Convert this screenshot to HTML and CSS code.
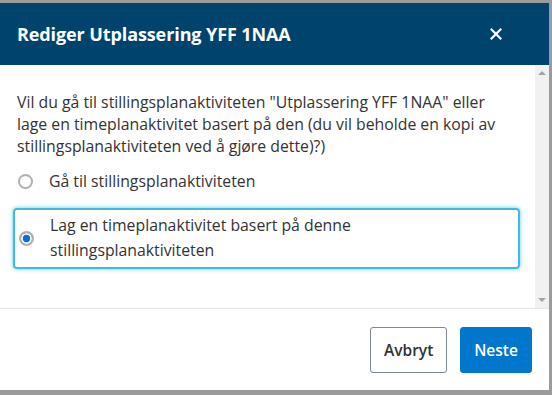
FILE: index.html
```html
<!DOCTYPE html>
<html lang="no">
  <head>
    <title>Rediger Utplassering YFF 1NAA</title>
    <meta name="viewport" content="width=device-width, initial-scale=1.0">
    <link rel="stylesheet" href="styles.css">
  </head>
  <body>
    <div class="modal">
      <div class="modal-header">
        <h1 class="modal-title">Rediger Utplassering YFF 1NAA</h1>
        <button class="close-btn" aria-label="Lukk">
          <svg width="12" height="12" viewBox="0 0 12 12">
            <path d="M1.5 1.5 L10.5 10.5 M10.5 1.5 L1.5 10.5" stroke="#fff" stroke-width="2.2" stroke-linecap="square"/>
          </svg>
        </button>
      </div>
      <div class="modal-body">
        <div class="body-content">
          <p class="question">Vil du gå til stillingsplanaktiviteten "Utplassering YFF 1NAA" eller lage en timeplanaktivitet basert på den (du vil beholde en kopi av stillingsplanaktiviteten ved å gjøre dette)?)</p>
          <label class="option">
            <span class="radio"></span>
            <span class="option-text">Gå til stillingsplanaktiviteten</span>
          </label>
          <label class="option selected">
            <span class="radio checked"></span>
            <span class="option-text">Lag en timeplanaktivitet basert på denne stillingsplanaktiviteten</span>
          </label>
        </div>
        <div class="scrollbar">
          <span class="arrow-up"></span>
          <span class="arrow-down"></span>
        </div>
      </div>
      <div class="modal-footer">
        <button class="btn btn-default">Avbryt</button>
        <button class="btn btn-primary">Neste</button>
      </div>
    </div>
  </body>
</html>
```

FILE: styles.css
```css
html, body {
  margin: 0;
  padding: 0;
}
body {
  background-color: #9b9b9b;
  font-family: "Open Sans", Arial, sans-serif;
  height: 395px;
  overflow: hidden;
}
.modal {
  margin-top: 3px;
  width: 549px;
  height: 387px;
  background-color: #fff;
  display: flex;
  flex-direction: column;
}
.modal-header {
  height: 62px;
  background-color: #00446e;
  display: flex;
  align-items: center;
  justify-content: space-between;
  padding: 0 47px 0 17px;
}
.modal-title {
  margin: 0;
  color: #fff;
  font-size: 18px;
  font-weight: 700;
  letter-spacing: -0.1px;
}
.close-btn {
  background: none;
  border: 0;
  padding: 0;
  width: 12px;
  height: 12px;
  display: flex;
}
.modal-body {
  height: 243px;
  display: flex;
  border-bottom: 1px solid #e6e6e6;
}
.body-content {
  flex: 1;
  padding: 26px 0 0 13px;
}
.question {
  margin: 0 18px 12px 4px;
  font-size: 15.8px;
  line-height: 22px;
  color: #333;
}
.option {
  display: flex;
  align-items: center;
  gap: 16px;
  color: #333;
  font-size: 15.8px;
  line-height: 25px;
  padding: 0 0 0 5px;
}
.option.selected {
  margin-top: 14px;
  width: 489px;
  padding: 3px 10px 4px 4px;
  border: 2px solid #3dbbe3;
  border-radius: 4px;
  box-shadow: 0 0 4px rgba(61, 187, 227, 0.8);
}
.radio {
  flex: none;
  box-sizing: border-box;
  width: 15px;
  height: 15px;
  border: 2px solid #b0b0b0;
  border-radius: 50%;
  background-color: #fff;
}
.radio.checked {
  background-color: #0a6fcf;
  box-shadow: inset 0 0 0 1.8px #fff;
}
.scrollbar {
  width: 14px;
  background-color: #f1f1f1;
  display: flex;
  flex-direction: column;
  justify-content: space-between;
  align-items: center;
  padding: 6px 0;
}
.arrow-up, .arrow-down {
  width: 0;
  height: 0;
  border-left: 4px solid transparent;
  border-right: 4px solid transparent;
}
.arrow-up {
  border-bottom: 4px solid #a3a3a3;
}
.arrow-down {
  border-top: 4px solid #a3a3a3;
}
.modal-footer {
  flex: 1;
  display: flex;
  justify-content: flex-end;
  align-items: center;
  gap: 13px;
  padding: 0 17px 0 0;
}
.btn {
  height: 46px;
  border-radius: 3px;
  font-family: "Open Sans", Arial, sans-serif;
  font-size: 15.5px;
  font-weight: 600;
  padding: 0 13px;
}
.btn-default {
  background-color: #fff;
  color: #333;
  border: 1px solid #7d8a96;
  width: 77px;
}
.btn-primary {
  background-color: #0077cc;
  color: #fff;
  border: 1px solid #0077cc;
  width: 72px;
}
```
